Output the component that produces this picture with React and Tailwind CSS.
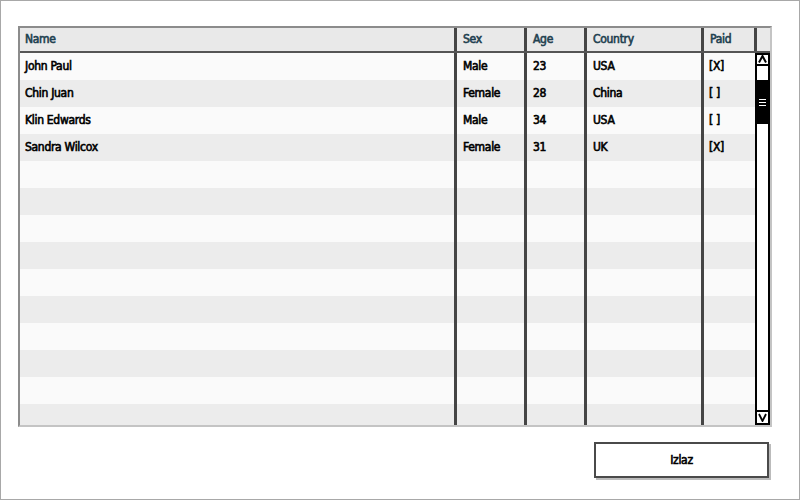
import React from 'react';

const people = [
  { name: 'John Paul', sex: 'Male', age: '23', country: 'USA', paid: '[X]' },
  { name: 'Chin Juan', sex: 'Female', age: '28', country: 'China', paid: '[ ]' },
  { name: 'Klin Edwards', sex: 'Male', age: '34', country: 'USA', paid: '[ ]' },
  { name: 'Sandra Wilcox', sex: 'Female', age: '31', country: 'UK', paid: '[X]' },
];

const rows = [...people, ...Array.from({ length: 10 }, () => null)];

const font = { fontFamily: '"DejaVu Sans Condensed", "DejaVu Sans", sans-serif' };

function Row({ person, index }) {
  const bg = index % 2 === 0 ? 'bg-[#fafafa]' : 'bg-[#ececec]';
  return (
    <div className={`flex h-[27px] shrink-0 ${bg} text-[12px] tracking-[-0.3px] text-black [-webkit-text-stroke:0.6px_black]`}>
      <div className="flex w-[437px] items-center border-r-[3px] border-[#454545] pb-[1px] pl-[5px]">{person?.name}</div>
      <div className="flex w-[70px] items-center border-r-[3px] border-[#454545] pb-[1px] pl-[6px]">{person?.sex}</div>
      <div className="flex w-[60px] items-center border-r-[3px] border-[#454545] pb-[1px] pl-[6px]">{person?.age}</div>
      <div className="flex w-[117px] items-center border-r-[3px] border-[#454545] pb-[1px] pl-[6px]">{person?.country}</div>
      <div className="flex flex-1 items-center pb-[1px] pl-[5px]">{person?.paid}</div>
    </div>
  );
}

function Scrollbar() {
  return (
    <div className="flex w-[15px] shrink-0 flex-col border-2 border-black bg-white">
      <div className="flex h-[11px] items-start justify-center border-b-2 border-black">
        <svg width="9" height="8" viewBox="0 0 9 8">
          <path d="M1 7.5 L4.5 1 L8 7.5" fill="none" stroke="black" strokeWidth="2" />
        </svg>
      </div>
      <div className="h-[14px]" />
      <div className="flex h-[44px] flex-col items-center justify-center gap-[2px] bg-black">
        <div className="h-[1px] w-[7px] bg-white" />
        <div className="h-[1px] w-[7px] bg-white" />
        <div className="h-[1px] w-[7px] bg-white" />
      </div>
      <div className="flex-1" />
      <div className="flex h-[13px] items-center justify-center border-t-2 border-black">
        <svg width="9" height="9" viewBox="0 0 9 9">
          <path d="M1 1 L4.5 8 L8 1" fill="none" stroke="black" strokeWidth="1.8" />
        </svg>
      </div>
    </div>
  );
}

export default function App() {
  return (
    <div className="h-[500px] w-[800px] overflow-hidden border border-[#a8a8a8] bg-white" style={font}>
      <div className="ml-[17px] mt-[25px] flex h-[401px] w-[754px] flex-col border-2 border-b-[#c4c4c4] border-l-[#8c8c8c] border-r-[#c4c4c4] border-t-[#8c8c8c]">
        <div className="flex h-[25px] shrink-0 border-b-2 border-[#555] bg-[#e9e9e9] text-[12px] tracking-[-0.3px] text-[#1f4150] [-webkit-text-stroke:0.6px_#1f4150]">
          <div className="flex w-[437px] items-center border-r-[3px] border-[#454545] pb-[2px] pl-[5px]">Name</div>
          <div className="flex w-[70px] items-center border-r-[3px] border-[#454545] pb-[2px] pl-[6px]">Sex</div>
          <div className="flex w-[60px] items-center border-r-[3px] border-[#454545] pb-[2px] pl-[6px]">Age</div>
          <div className="flex w-[117px] items-center border-r-[3px] border-[#454545] pb-[2px] pl-[6px]">Country</div>
          <div className="flex w-[53px] items-center border-r-[3px] border-[#454545] pb-[2px] pl-[6px]">Paid</div>
          <div className="flex-1" />
        </div>
        <div className="flex min-h-0 flex-1">
          <div className="flex min-w-0 flex-1 flex-col overflow-hidden">
            {rows.map((p, i) => (
              <Row key={i} person={p} index={i} />
            ))}
          </div>
          <Scrollbar />
        </div>
      </div>
      <div className="mt-[15px] flex justify-end pr-[30px]">
        <button className="flex h-[36px] w-[175px] items-center justify-center border-2 border-[#4a4a4a] bg-white text-[12px] tracking-[-0.3px] text-black shadow-[2px_2px_0_#bbb] [-webkit-text-stroke:0.6px_black]" style={font}>
          Izlaz
        </button>
      </div>
    </div>
  );
}
